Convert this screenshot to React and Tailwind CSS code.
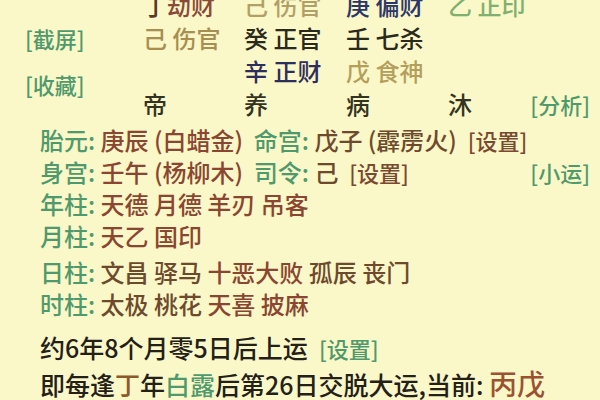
import React from 'react'

const font = { fontFamily: '"Noto Sans CJK SC", "Noto Sans", sans-serif' }

const G = ({ children, className = '' }) => <span className={`text-[#4f9a6c] ${className}`}>{children}</span>
const R = ({ children }) => <span className="text-[#8a4630]">{children}</span>
const B = ({ children }) => <span className="text-[#6e4a2c]">{children}</span>

const colStart = ['col-start-1', 'col-start-2', 'col-start-3', 'col-start-4', 'col-start-5']
const rowStart = ['row-start-1', 'row-start-2', 'row-start-3', 'row-start-4']

// [row, col, content]
const cells = [
  [0, 1, <><span className="text-[#5a3a20]">丁</span> <span className="text-[#8a4a38]">劫财</span></>],
  [0, 2, <span className="text-[#b0a068]">己 伤官</span>],
  [0, 3, <span className="text-[#2c3668]">庚 偏财</span>],
  [0, 4, <span className="text-[#80b070]">乙 正印</span>],
  [1, 1, <span className="text-[#a88e50]">己 伤官</span>],
  [1, 2, <span className="text-[#2a2a1c]">癸 正官</span>],
  [1, 3, <span className="text-[#2a2a1c]">壬 七杀</span>],
  [2, 2, <span className="text-[#2e2e5c]">辛 正财</span>],
  [2, 3, <span className="text-[#b49e5c]">戊 食神</span>],
  [3, 1, <span className="text-[#333322]">帝</span>],
  [3, 2, <span className="text-[#333322]">养</span>],
  [3, 3, <span className="text-[#333322]">病</span>],
  [3, 4, <span className="text-[#333322]">沐</span>],
]

export default function App() {
  return (
    <div className="w-[600px] h-[400px] overflow-hidden bg-[#faf7c9] text-[24px] font-medium leading-none" style={font}>
      {/* 十神 grid */}
      <div className="-mt-[12px] grid grid-cols-[143px_101px_102px_102px_1fr] grid-rows-[33px_33px_33px_33px]">
        {cells.map(([r, c, content], i) => (
          <div key={i} className={`${rowStart[r]} ${colStart[c]} flex items-center whitespace-nowrap`}>
            {content}
          </div>
        ))}
        <div className="row-start-2 col-start-1 flex items-center pl-[25px]">
          <G className="text-[22px]">[截屏]</G>
        </div>
        <div className="row-start-3 row-span-2 col-start-1 flex items-center pl-[25px] pb-[6px]">
          <G className="text-[22px]">[收藏]</G>
        </div>
        <div className="row-start-4 col-start-5 flex items-center justify-end pr-[10px]">
          <G className="text-[22px]">[分析]</G>
        </div>
      </div>

      {/* 胎元 / 身宫 / 神煞 */}
      <div className="mt-[4px] pl-[40px] pr-[10px] whitespace-nowrap">
        <div className="h-[32px] flex items-center">
          <span>
            <G>胎元: </G><R>庚辰 (白蜡金)&nbsp; </R><G>命宫: </G><B>戊子 (霹雳火)&nbsp; </B><span className="text-[22px] text-[#7a4a30]">[设置]</span>
          </span>
        </div>
        <div className="h-[32px] flex items-center justify-between">
          <span>
            <G>身宫: </G><R>壬午 (杨柳木)&nbsp; </R><G>司令: </G><B>己&nbsp; </B><span className="text-[22px] text-[#7a4a30]">[设置]</span>
          </span>
          <G className="text-[22px]">[小运]</G>
        </div>
        <div className="h-[32px] flex items-center">
          <span><G>年柱: </G><R>天德 月德 羊刃 吊客</R></span>
        </div>
        <div className="h-[32px] flex items-center">
          <span><G>月柱: </G><R>天乙 国印</R></span>
        </div>
        <div className="mt-[4px] h-[32px] flex items-center">
          <span><G>日柱: </G><B>文昌 驿马 </B><R>十恶大败</R><B> 孤辰 丧门</B></span>
        </div>
        <div className="h-[32px] flex items-center">
          <span><G>时柱: </G><B>太极 桃花 </B><R>天喜 披麻</R></span>
        </div>

        {/* 起运 */}
        <div className="mt-[9px] h-[36px] flex items-center text-[25px] text-[#232018]">
          <span>约6年8个月零5日后上运&nbsp;&nbsp;<G className="text-[22px]">[设置]</G></span>
        </div>
        <div className="h-[36px] flex items-center text-[25px] text-[#232018]">
          <span>
            即每逢<span className="text-[#8a5a2a]">丁</span>年<G>白露</G>后第26日交脱大运,当前: <span className="text-[28px] text-[#9a5232]">丙戊</span>
          </span>
        </div>
      </div>
    </div>
  )
}
